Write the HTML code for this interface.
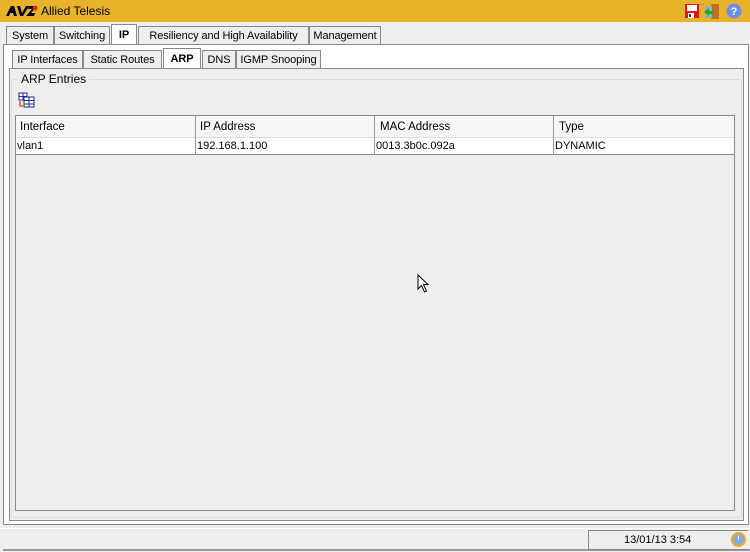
<!DOCTYPE html>
<html><head><meta charset="utf-8"><style>
*{box-sizing:border-box;margin:0;padding:0}
body{width:750px;height:552px;background:#eeeeee;font-family:"Liberation Sans","Noto Sans CJK JP",sans-serif;font-size:12px;color:#000;position:relative;overflow:hidden}
.a{position:absolute}
.hdr{left:0;top:0;width:750px;height:22px;background:#e8b22a}
.tab{position:absolute;height:18px;border:1px solid #888;border-bottom:none;background:#eee;line-height:18px;font-size:11px;white-space:nowrap;text-align:center;overflow:hidden;letter-spacing:-0.1px}
.sel{background:#fff;font-weight:bold;height:20px;line-height:20px;z-index:2}
.cell{position:absolute;font-size:11px;white-space:nowrap}
</style></head><body>
<div class="a hdr"></div>
<svg class="a" style="left:6px;top:5px" width="32" height="12" viewBox="0 0 32 12">
<polygon points="0,11 5,1 8,1 11,11 8,11 7,8 4,8 3,11" fill="#000"/>
<polygon points="11,1 14,1 16,8 20,1 23,1 17,11 14,11" fill="#000"/>
<polygon points="20,11 26,4 22,4 23,1 31,1 25,8 29,8 28,11" fill="#000"/>
<circle cx="29" cy="3" r="2.4" fill="#e0201a"/>
</svg>
<div class="a" style="left:41px;top:4px;font-size:12px">Allied Telesis</div>
<svg class="a" style="left:684px;top:3px" width="60" height="17">
<rect x="1" y="1" width="14" height="14" fill="#e01818"/><rect x="3" y="2" width="10" height="6" fill="#fff"/><rect x="4" y="10" width="6" height="5" fill="#fff"/><rect x="5" y="11" width="2" height="3" fill="#333"/>
<rect x="27" y="1" width="8" height="15" fill="#c07020"/><rect x="21" y="3" width="7" height="12" fill="#8ab0d8"/><polygon points="20,9 25,5 25,8 29,8 29,11 25,11 25,13" fill="#30a030"/>
<circle cx="50" cy="8" r="7.5" fill="#6d8ee8"/><text x="50" y="12" font-size="11" font-weight="bold" fill="#fff" text-anchor="middle" font-family="Liberation Sans">?</text>
</svg>
<div class="a" style="left:3px;top:44px;width:746px;height:481px;border:1px solid #888;background:#fff"></div>
<div class="tab" style="left:6px;top:26px;width:48px">System</div>
<div class="tab" style="left:54px;top:26px;width:56px">Switching</div>
<div class="tab sel" style="left:111px;top:24px;width:26px">IP</div>
<div class="tab" style="left:138px;top:26px;width:171px">Resiliency and High Availability</div>
<div class="tab" style="left:309px;top:26px;width:72px">Management</div>
<div class="a" style="left:9px;top:68px;width:735px;height:453px;border:1px solid #888;background:#eee"></div>
<div class="tab" style="left:12px;top:50px;width:71px">IP Interfaces</div>
<div class="tab" style="left:83px;top:50px;width:79px">Static Routes</div>
<div class="tab sel" style="left:163px;top:48px;width:38px;background:#fff">ARP</div>
<div class="tab" style="left:202px;top:50px;width:34px">DNS</div>
<div class="tab" style="left:236px;top:50px;width:85px">IGMP Snooping</div>
<div class="a" style="left:11px;top:79px;width:731px;height:439px;border:1px solid #d8dde6;border-radius:3px"></div>
<div class="a" style="left:18px;top:72px;background:#eee;padding:0 3px;font-size:12px">ARP Entries</div>
<svg class="a" style="left:18px;top:92px" width="18" height="16">
<rect x="1" y="1" width="8" height="7" fill="#fff" stroke="#1a2a9a"/><line x1="5" y1="1" x2="5" y2="8" stroke="#1a2a9a"/><line x1="1" y1="4.5" x2="9" y2="4.5" stroke="#1a2a9a"/>
<rect x="6" y="5" width="10" height="10" fill="#fff" stroke="#1a2a9a"/><line x1="11" y1="5" x2="11" y2="15" stroke="#1a2a9a"/><line x1="6" y1="8.5" x2="16" y2="8.5" stroke="#1a2a9a"/><line x1="6" y1="12" x2="16" y2="12" stroke="#1a2a9a"/>
<path d="M2 9 V14 H6" stroke="#f06010" fill="none" stroke-width="1.5"/>
</svg>
<div class="a" style="left:15px;top:115px;width:720px;height:396px;border:1px solid #888;background:#eee"></div>
<div class="a" style="left:16px;top:116px;width:718px;height:22px;background:#f6f6f6;border-bottom:1px solid #ddd"></div>
<div class="a" style="left:16px;top:138px;width:718px;height:17px;background:#fff;border-bottom:1px solid #888"></div>
<div class="a" style="left:195px;top:116px;width:1px;height:38px;background:#999"></div>
<div class="a" style="left:374px;top:116px;width:1px;height:38px;background:#999"></div>
<div class="a" style="left:553px;top:116px;width:1px;height:38px;background:#999"></div>
<div class="cell" style="left:20px;top:121px;font-size:11.5px">Interface</div>
<div class="cell" style="left:200px;top:121px;font-size:11.5px">IP Address</div>
<div class="cell" style="left:380px;top:121px;font-size:11.5px">MAC Address</div>
<div class="cell" style="left:559px;top:121px;font-size:11.5px">Type</div>
<div class="cell" style="left:17px;top:140px">vlan1</div>
<div class="cell" style="left:197px;top:140px">192.168.1.100</div>
<div class="cell" style="left:376px;top:140px">0013.3b0c.092a</div>
<div class="cell" style="left:555px;top:140px">DYNAMIC</div>
<svg class="a" style="left:417px;top:274px" width="14" height="20"><path d="M1 1 V15 L4.5 11.5 L7.5 18 L9.5 17 L6.5 10.5 H11 Z" fill="#fff" stroke="#000"/></svg>
<div class="a" style="left:0;top:528px;width:750px;height:1px;background:#fff"></div>
<div class="a" style="left:3px;top:549px;width:747px;height:2px;background:#999"></div>
<div class="a" style="left:588px;top:530px;width:160px;height:20px;border:1px solid #888;border-right:none"></div>
<div class="a" style="left:624px;top:534px;font-size:11px">13/01/13 3:54</div>
<svg class="a" style="left:730px;top:531px" width="17" height="17"><circle cx="8.5" cy="8.5" r="7.5" fill="#e8a830"/><circle cx="8.5" cy="8.5" r="5" fill="#7ab0e8"/><line x1="8.5" y1="8.5" x2="8.5" y2="4.5" stroke="#fff"/></svg>
</body></html>
